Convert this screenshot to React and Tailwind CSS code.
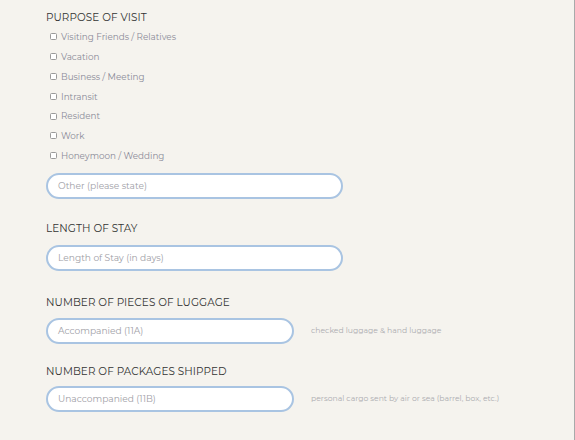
import React from "react";

const font = { fontFamily: '"Montserrat", "Noto Sans", "Open Sans", sans-serif' };

function Heading({ children, className = "" }) {
  return (
    <div className={"text-[10.4px] leading-[14px] text-[#333333] uppercase tracking-[0.1px] " + className}>
      {children}
    </div>
  );
}

function Check({ label }) {
  return (
    <label className="flex items-center h-[19.8px] pl-[4px]">
      <span className="w-[7px] h-[7px] border border-[#9a9a9a] rounded-[1.5px] bg-white mr-[4px]"></span>
      <span className="text-[8.8px] text-[#8a8a98]">{label}</span>
    </label>
  );
}

function Input({ placeholder, width, className = "" }) {
  return (
    <div
      className={
        "h-[26px] rounded-full border-2 border-[#a9c4e2] bg-white flex items-center pl-[10px] " + className
      }
      style={{ width }}
    >
      <span className="text-[9.1px] text-[#9e9ea6]">{placeholder}</span>
    </div>
  );
}

export default function App() {
  const items = [
    "Visiting Friends / Relatives",
    "Vacation",
    "Business / Meeting",
    "Intransit",
    "Resident",
    "Work",
    "Honeymoon / Wedding",
  ];
  return (
    <div className="w-[575px] h-[440px] bg-[#f5f3ee] flex" style={font}>
      <div className="flex-1 pl-[46px] pt-[11px]">
        <Heading>Purpose of Visit</Heading>
        <div className="mt-[2px] flex flex-col">
          {items.map((t) => (
            <Check key={t} label={t} />
          ))}
        </div>
        <Input placeholder="Other (please state)" width="297px" className="mt-[7px]" />

        <Heading className="mt-[23px]">Length of Stay</Heading>
        <Input placeholder="Length of Stay (in days)" width="297px" className="mt-[9px]" />

        <Heading className="mt-[25px]">Number of Pieces of Luggage</Heading>
        <div className="mt-[8px] flex items-center">
          <Input placeholder="Accompanied (11A)" width="248px" />
          <span className="ml-[17px] text-[7.7px] text-[#acacb0]">checked luggage &amp; hand luggage</span>
        </div>

        <Heading className="mt-[21px]">Number of Packages Shipped</Heading>
        <div className="mt-[7px] flex items-center">
          <Input placeholder="Unaccompanied (11B)" width="248px" />
          <span className="ml-[17px] text-[7.7px] text-[#acacb0]">
            personal cargo sent by air or sea (barrel, box, etc.)
          </span>
        </div>
      </div>
      <div className="w-[1px] h-full bg-[#a8aaaa]"></div>
    </div>
  );
}
